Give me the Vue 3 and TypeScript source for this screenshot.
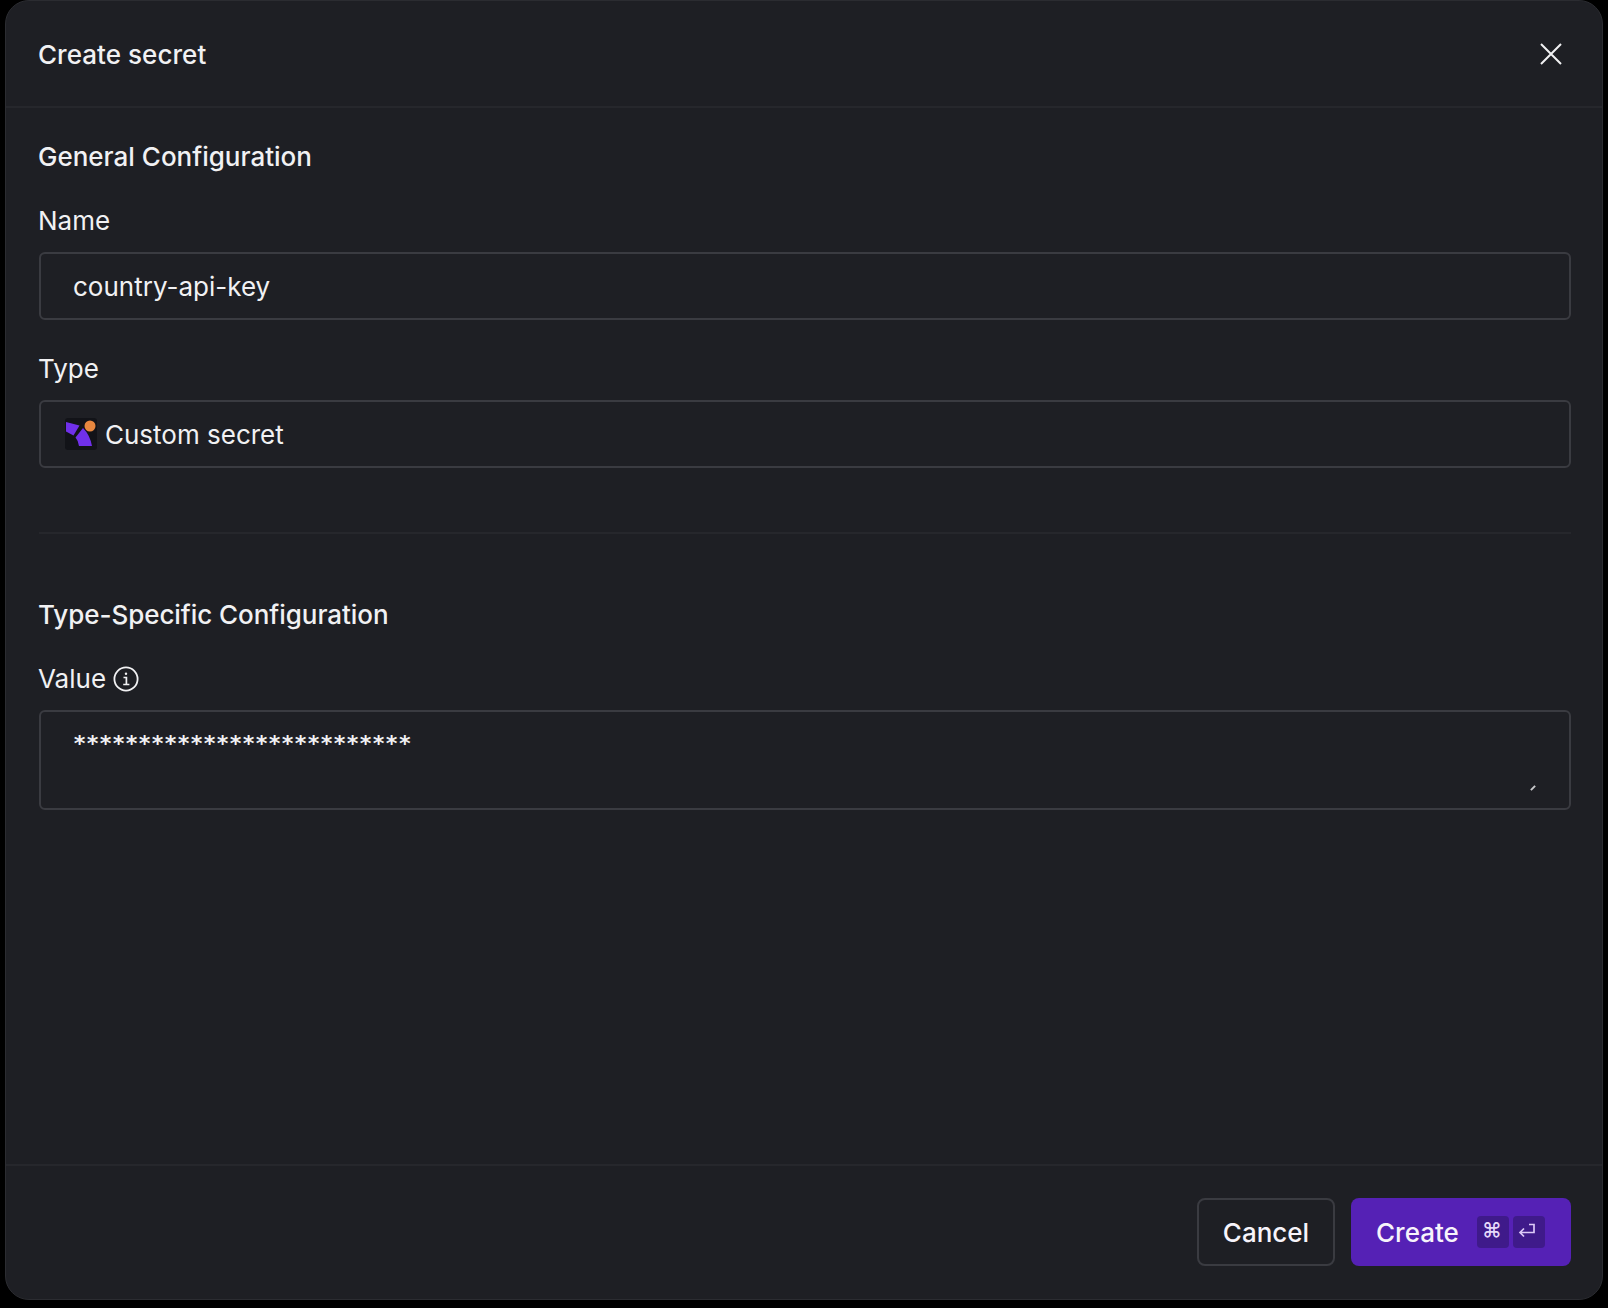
<script setup lang="ts">
const stars = '*'.repeat(26)
</script>

<template>
  <div class="modal">
    <header class="head">
      <h1 class="title">Create secret</h1>
      <svg class="close" width="24" height="24" viewBox="0 0 24 24" fill="none" stroke="#f1f1f3" stroke-width="2">
        <path d="M2 2 L22 22 M22 2 L2 22" />
      </svg>
    </header>

    <main class="body">
      <section class="general">
        <h2 class="section">General Configuration</h2>
        <div class="label">Name</div>
        <div class="field text">country-api-key</div>
        <div class="label">Type</div>
        <div class="field select">
          <svg class="logo" width="32" height="32" viewBox="0 0 32 32">
            <rect width="32" height="32" rx="3" fill="#121318" />
            <path d="M1 4 L14.5 7.5 L8.5 17.5 L1 13.5 Z" fill="#7030ea" />
            <path d="M18 10 Q25 17 27 28 L14 28 Q13.5 23 10.5 19.5 Z" fill="#7030ea" />
            <circle cx="25" cy="8" r="5.5" fill="#e8873f" />
          </svg>
          <span>Custom secret</span>
        </div>
      </section>

      <div class="divider"></div>

      <section class="specific">
        <h2 class="section">Type-Specific Configuration</h2>
        <div class="label value-label">
          <span>Value</span>
          <svg width="26" height="26" viewBox="0 0 26 26" fill="none" stroke="#f1f1f3" stroke-width="1.8">
            <circle cx="13" cy="13" r="11.6" />
            <path d="M10.5 11.5 H13.4 V18.5 M10.2 18.5 H16.4" stroke-width="1.7" />
            <circle cx="13" cy="7.8" r="1.2" fill="#f1f1f3" stroke="none" />
          </svg>
        </div>
        <div class="field area">
          <span class="stars">{{ stars }}</span>
          <span class="grip"></span>
        </div>
      </section>
    </main>

    <footer class="foot">
      <button class="btn cancel" type="button">Cancel</button>
      <button class="btn create" type="button">
        <span>Create</span>
        <span class="keys">
          <span class="key cmd">⌘</span>
          <span class="key">
            <svg width="18" height="16" viewBox="0 0 18 16" fill="none" stroke="#dcc9f7" stroke-width="1.7">
              <path d="M11 1.5 H16 V9.5 H2 M6 5.5 L2 9.5 L6 13.5" />
            </svg>
          </span>
        </span>
      </button>
    </footer>
  </div>
</template>

<style>
html, body {
  margin: 0;
  background: #000;
}
</style>

<style scoped>
.modal {
  box-sizing: border-box;
  width: 1598px;
  height: 1300px;
  margin: 0 5px;
  display: flex;
  flex-direction: column;
  background: #1e1f24;
  border: 1px solid #2b2c31;
  border-radius: 24px;
  color: #f1f1f3;
  font-family: Inter, "Liberation Sans", sans-serif;
  font-size: 26px;
  overflow: hidden;
}
.head {
  height: 107px;
  flex: none;
  box-sizing: border-box;
  padding: 0 39px 0 32px;
  display: flex;
  align-items: center;
  justify-content: space-between;
  border-bottom: 2px solid #26272c;
}
.title {
  margin: 1px 0 0;
  font-size: 26px;
  font-weight: 500;
  letter-spacing: 0.05px;
}
.close {
  display: block;
}
.body {
  flex: 1;
  padding: 0 31px 0 33px;
  min-height: 0;
}
.section {
  margin: 0 0 0 -1px;
  font-size: 26px;
  font-weight: 500;
  line-height: 32px;
}
.specific .section {
  letter-spacing: -0.05px;
}
.general {
  padding-top: 33px;
}
.label {
  margin: 32px 0 0 -1px;
  line-height: 32px;
  font-size: 26px;
}
.general .field + .label {
  margin-top: 33px;
}
.field {
  box-sizing: border-box;
  margin-top: 15px;
  border: 2px solid #3a3b41;
  border-radius: 6px;
  display: flex;
  align-items: center;
}
.text,
.select {
  height: 68px;
}
.text {
  padding-left: 32px;
}
.select {
  padding-left: 24px;
  gap: 8px;
}
.logo {
  display: block;
  flex: none;
}
.divider {
  height: 2px;
  margin-top: 64px;
  background: #26272c;
}
.specific {
  padding-top: 65px;
}
.value-label {
  display: flex;
  align-items: center;
  gap: 7px;
}
.area {
  position: relative;
  height: 100px;
  padding: 16px 32px 0;
  align-items: flex-start;
}
.stars {
  line-height: 32px;
  font-family: "DejaVu Sans Mono", "Liberation Mono", monospace;
  font-size: 22px;
  font-weight: 700;
  letter-spacing: -0.24px;
}
.grip {
  position: absolute;
  right: 33px;
  bottom: 19px;
  width: 6px;
  height: 2px;
  background: #c9c9cc;
  transform: rotate(-45deg);
}
.foot {
  flex: none;
  height: 135px;
  box-sizing: border-box;
  padding: 32px 31px 0 0;
  display: flex;
  justify-content: flex-end;
  align-items: flex-start;
  gap: 16px;
  border-top: 2px solid #26272c;
}
.btn {
  box-sizing: border-box;
  height: 68px;
  border-radius: 8px;
  font-family: inherit;
  font-size: 26px;
  font-weight: 500;
  color: #f7f4fb;
  display: flex;
  align-items: center;
}
.cancel {
  width: 138px;
  justify-content: center;
  background: transparent;
  border: 2px solid #3a3b41;
}
.create {
  width: 220px;
  padding: 0 25px;
  gap: 18px;
  background: #5521b5;
  border: 0;
}
.keys {
  display: flex;
  gap: 4px;
  margin-top: -1px;
}
.key {
  width: 32px;
  height: 32px;
  border-radius: 4px;
  background: #3f1a8a;
  color: #e6d9fa;
  font-size: 16px;
  display: flex;
  align-items: center;
  justify-content: center;
}
.cmd {
  font-size: 20px;
  padding: 0 2px 3px 0;
  box-sizing: border-box;
}
.key svg {
  margin: -2px 3px 0 0;
}
</style>
